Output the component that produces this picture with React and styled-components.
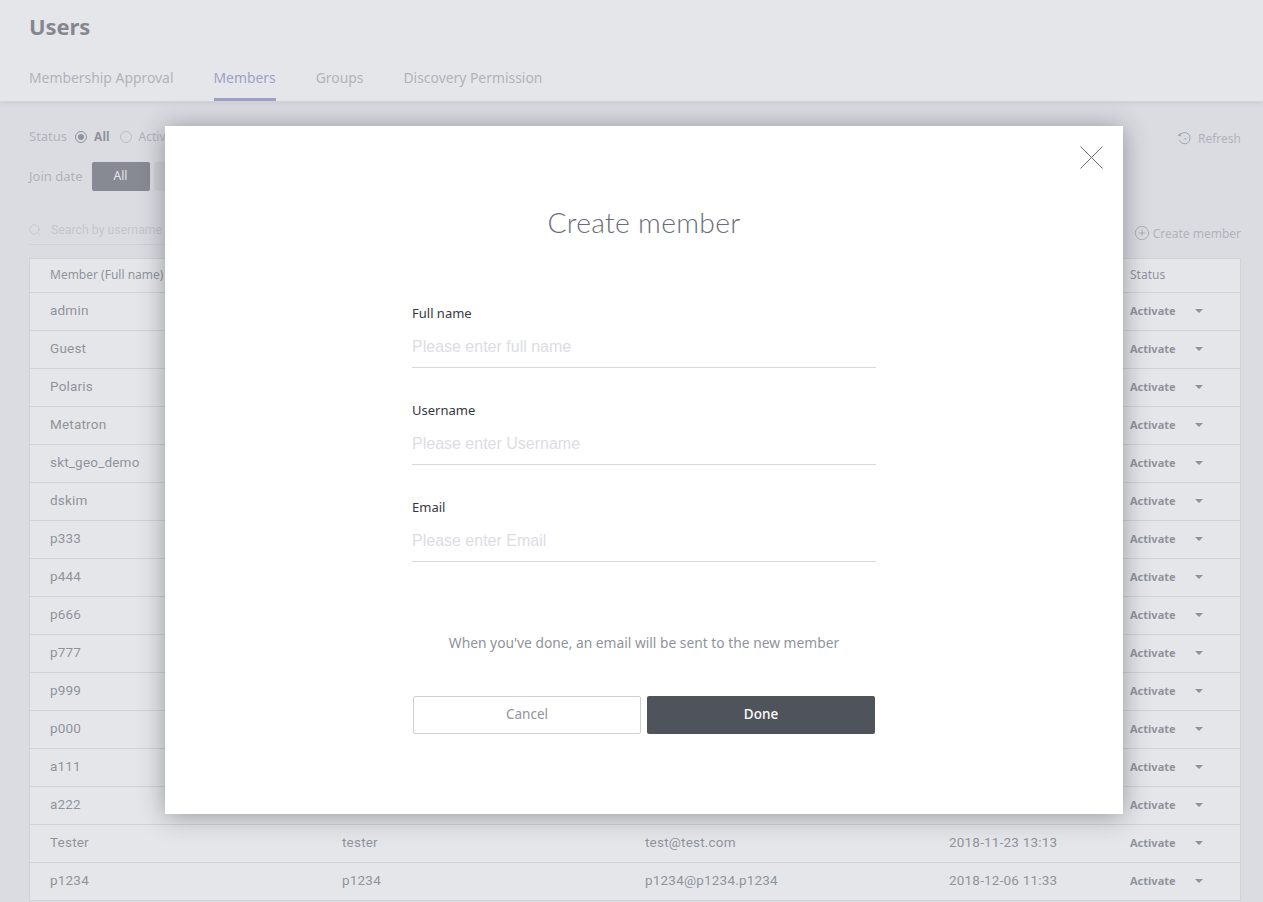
import React from "react";
import styled, { createGlobalStyle } from "styled-components";
import { Search, CirclePlus } from "lucide-react";

const Global = createGlobalStyle`
  html, body { margin: 0; padding: 0; height: 902px; overflow: hidden; background: #e9eaee; }
  body { font-family: "Noto Sans", "Open Sans", sans-serif; color: #4b515b; }
  * { box-sizing: border-box; }
  #root { height: 902px; }
`;

const Page = styled.div`position: relative; width: 1263px; height: 902px; overflow: hidden;`;
const Header = styled.header`
  height: 102px; background: #fff; padding: 0 29px; box-shadow: 0 2px 4px rgba(0,0,0,.12);
  display: flex; flex-direction: column; border-bottom: 1px solid #d8d9de;
`;
const Title = styled.h1`margin: 12px 0 0; font-size: 22px; line-height: 28px; font-weight: 700; color: #35393f; letter-spacing: -.1px;`;
const Tabs = styled.nav`display: flex; gap: 40px; margin-top: 21px;`;
const Tab = styled.a`
  font-size: 13.9px; line-height: 20px; height: 40px; padding-top: 7px;
  color: ${p => (p.$active ? "#666eb2" : "#90939b")};
  border-bottom: 3px solid ${p => (p.$active ? "#666eb2" : "transparent")};
`;
const Content = styled.main`padding: 0 22px 0 29px;`;
const FilterRow = styled.div`display: flex; align-items: center; font-size: 13px; color: #90939b;`;
const StatusRow = styled(FilterRow)`height: 24px; margin-top: 22px; justify-content: space-between;`;
const Group = styled.div`display: flex; align-items: center;`;
const Radio = styled.span`
  width: 12px; height: 12px; border-radius: 50%; margin: 1px 7px 0 8px; border: 1px solid ${p => (p.$on ? "#4b515b" : "#a9abb2")};
  display: flex; align-items: center; justify-content: center;
  &::after { content: ""; width: 6px; height: 6px; border-radius: 50%; background: ${p => (p.$on ? "#4b515b" : "transparent")}; }
`;
const RadioLabel = styled.span`font-size: 12px; font-weight: ${p => (p.$on ? 700 : 400)}; color: ${p => (p.$on ? "#4b515b" : "#90939b")}; margin-right: 2px;`;
const RefreshLink = styled.span`display: flex; align-items: center; gap: 6px; font-size: 12px; color: #90939b; margin-top: 5px;`;
const DateRow = styled(FilterRow)`margin-top: 14px; height: 29px;`;
const DateLabel = styled.span`margin-top: -2px;`;
const DateBtn = styled.button`
  width: 58px; height: 29px; margin-left: ${p => (p.$first ? "9px" : "4px")}; border-radius: 2px; font: inherit; font-size: 12px; padding: 0 0 3px;
  background: ${p => (p.$on ? "#3c4049" : "#d4d5da")}; border: 0; color: #fff;
`;
const SearchRow = styled.div`display: flex; justify-content: space-between; align-items: flex-start; margin-top: 25px; height: 42px;`;
const SearchBox = styled.label`
  width: 300px; height: 29px; display: flex; align-items: center; gap: 9px; border-bottom: 1px solid #d4d5da; color: #a9abb2;
  svg { margin-left: -1px; }
`;
const SearchInput = styled.input`
  border: 0; outline: 0; background: transparent; flex: 1; font-family: "Roboto", sans-serif; font-size: 12.3px; padding: 0;
  margin-bottom: 1px;
  &::placeholder { color: #b9bbc1; opacity: 1; }
`;
const CreateLink = styled.span`display: flex; align-items: center; gap: 3px; font-size: 12px; color: #90939b; margin-top: 7px; height: 20px; svg { color: #5b6068; }`;
const Table = styled.div`width: 1212px; border-left: 1px solid #d4d5da; border-right: 1px solid #d4d5da; border-top: 1px solid #d4d5da; background: #fff;`;
const Row = styled.div`
  display: grid; grid-template-columns: 292px 303px 304px 181px 1fr; align-items: center; padding-left: 20px;
  height: ${p => (p.$head ? "34px" : "38px")}; border-bottom: 1px solid #d4d5da;
  font-size: ${p => (p.$head ? "12px" : "13.5px")}; color: #4b515b;
  font-family: ${p => (p.$head ? `"Noto Sans", sans-serif` : `"Roboto", sans-serif`)}; letter-spacing: ${p => (p.$head ? "0" : ".2px")};
`;
const Cell = styled.div`white-space: nowrap; padding-bottom: 4px; min-height: 1px;`;
const HeadCell = styled.div`white-space: nowrap; padding-bottom: 2px; min-height: 1px;`;
const StatusCell = styled.div`display: flex; align-items: center; margin-top: -3px;`;
const StatusText = styled.span`font-family: "Noto Sans", sans-serif; font-size: 11px; font-weight: 700; color: #4b515b; width: 65px; letter-spacing: 0;`;
const Caret = styled.span`width: 0; height: 0; margin-top: 1px; border-left: 4px solid transparent; border-right: 4px solid transparent; border-top: 4px solid #4b515b;`;

const Overlay = styled.div`
  position: absolute; inset: 0; background: rgba(205,207,215,.52); padding: 126px 0 0 165px;
`;
const Modal = styled.section`
  position: relative; width: 958px; height: 688px; background: #fff; box-shadow: 0 2px 24px rgba(40,42,50,.42);
  display: flex; flex-direction: column; align-items: center; padding-top: 77px;
`;
const Close = styled.button`
  position: absolute; top: 20px; right: 20px; width: 23px; height: 23px; padding: 0; border: 0; background: none; display: block;
`;
const ModalTitle = styled.h2`margin: 0; font-family: "Lato", sans-serif; font-weight: 300; font-size: 28.3px; line-height: 38px; color: #6a6e76; letter-spacing: .3px;`;
const Form = styled.form`width: 464px; margin: 63px 0 0; display: flex; flex-direction: column; gap: 17px;`;
const Field = styled.div`height: 80px; display: flex; flex-direction: column;`;
const Label = styled.label`font-size: 13px; line-height: 18px; height: 18px; color: #35393f;`;
const TextInput = styled.input`
  width: 100%; height: 46px; padding: 5px 0 0; border: 0; border-bottom: 1px solid #d8d9de; outline: 0; background: transparent;
  font-family: "Liberation Sans", sans-serif; font-size: 16px;
  &::placeholder { color: #dcdde2; opacity: 1; }
`;
const Help = styled.p`margin: 55px 0 0; font-size: 13.8px; line-height: 20px; color: #90939b;`;
const Buttons = styled.div`display: flex; gap: 6px; margin-top: 43px;`;
const Btn = styled.button`
  width: 228px; height: 38px; border-radius: 2px; font-family: "Noto Sans", sans-serif; font-size: 13.5px; padding: 0 0 2px;
  ${p => p.$primary
    ? "background:#4f535c;border:0;color:#fff;font-weight:500;"
    : "background:#fff;border:1px solid #cfd0d5;color:#90939b;"}
`;

const names = ["admin","Guest","Polaris","Metatron","skt_geo_demo","dskim","p333","p444","p666","p777","p999","p000","a111","a222"];
const rows = [
  ...names.map(n => [n, "", "", ""]),
  ["Tester","tester","test@test.com","2018-11-23 13:13"],
  ["p1234","p1234","p1234@p1234.p1234","2018-12-06 11:33"],
];

const RefreshIcon = () => (
  <svg width="15" height="15" viewBox="0 0 15 15" fill="none" stroke="#70747c" strokeWidth="1">
    <path d="M3.2 3.6A5.6 5.6 0 1 1 2.4 9.4" />
    <path d="M.6 4.4 3.8 5.4 3.8 1.8Z" fill="#70747c" stroke="none" />
    <path d="M7.4 6.9l1.6 1.6M9 6.9 7.4 8.5" strokeWidth=".8" />
  </svg>
);

export default function App() {
  return (
    <Page>
      <Global />
      <Header>
        <Title>Users</Title>
        <Tabs>
          <Tab>Membership Approval</Tab>
          <Tab $active>Members</Tab>
          <Tab>Groups</Tab>
          <Tab>Discovery Permission</Tab>
        </Tabs>
      </Header>
      <Content>
        <StatusRow>
          <Group>
            Status
            <Radio $on /><RadioLabel $on>All</RadioLabel>
            <Radio /><RadioLabel>Active</RadioLabel>
          </Group>
          <RefreshLink><RefreshIcon />Refresh</RefreshLink>
        </StatusRow>
        <DateRow>
          <DateLabel>Join date</DateLabel>
          <DateBtn $first $on>All</DateBtn>
          <DateBtn />
        </DateRow>
        <SearchRow>
          <SearchBox>
            <Search size={14} strokeWidth={1.1} />
            <SearchInput placeholder="Search by username" />
          </SearchBox>
          <CreateLink><CirclePlus size={16} strokeWidth={1} />Create member</CreateLink>
        </SearchRow>
        <Table>
          <Row $head>
            <HeadCell>Member (Full name)</HeadCell><HeadCell /><HeadCell /><HeadCell /><HeadCell>Status</HeadCell>
          </Row>
          {rows.map(r => (
            <Row key={r[0]}>
              <Cell>{r[0]}</Cell><Cell>{r[1]}</Cell><Cell>{r[2]}</Cell><Cell>{r[3]}</Cell>
              <StatusCell><StatusText>Activate</StatusText><Caret /></StatusCell>
            </Row>
          ))}
        </Table>
      </Content>
      <Overlay>
        <Modal>
          <Close aria-label="Close">
            <svg width="23" height="23" viewBox="0 0 23 23" stroke="#6b7078" strokeWidth="1" fill="none">
              <path d="M.5.5l22 22M22.5.5l-22 22" />
            </svg>
          </Close>
          <ModalTitle>Create member</ModalTitle>
          <Form>
            <Field><Label>Full name</Label><TextInput placeholder="Please enter full name" /></Field>
            <Field><Label>Username</Label><TextInput placeholder="Please enter Username" /></Field>
            <Field><Label>Email</Label><TextInput placeholder="Please enter Email" /></Field>
          </Form>
          <Help>When you've done, an email will be sent to the new member</Help>
          <Buttons>
            <Btn type="button">Cancel</Btn>
            <Btn type="button" $primary>Done</Btn>
          </Buttons>
        </Modal>
      </Overlay>
    </Page>
  );
}
